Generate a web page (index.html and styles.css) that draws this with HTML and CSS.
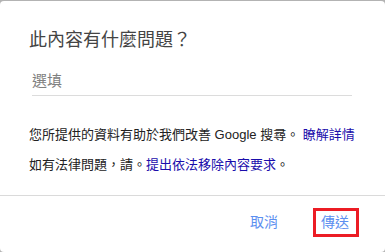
FILE: index.html
```html
<!DOCTYPE html>
<html lang="zh-Hant">
<head>
<meta charset="utf-8">
<title>此內容有什麼問題？</title>
<link rel="stylesheet" href="styles.css">
</head>
<body>
<div class="dialog">
  <div class="content">
    <h1 class="title">此內容有什麼問題？</h1>
    <div class="field"><span class="placeholder">選填</span></div>
    <p class="note">您所提供的資料有助於我們改善 Google 搜尋。 <a class="link" href="#">瞭解詳情</a></p>
    <p class="note">如有法律問題，請。<a class="link" href="#">提出依法移除內容要求</a>。</p>
  </div>
  <div class="footer">
    <span class="btn cancel">取消</span>
    <span class="btn send">傳送</span>
  </div>
</div>
</body>
</html>
```

FILE: styles.css
```css
html, body {
  margin: 0;
  padding: 0;
}
body {
  background: #b3b3b3;
  width: 385px;
  height: 252px;
  overflow: hidden;
  font-family: "Liberation Sans", "Noto Sans CJK TC", sans-serif;
}
.dialog {
  margin-top: 1px;
  height: 251px;
  background: #fff;
  border-radius: 4px;
  display: flex;
  flex-direction: column;
}
.content {
  padding: 0 20px 0 29px;
  border-bottom: 1px solid #dadada;
  height: 195px;
  box-sizing: border-box;
}
.title {
  margin: 27px 0 0 0;
  font-size: 18px;
  line-height: 24px;
  font-weight: normal;
  color: #444;
}
.field {
  margin: 19px 13px 0 3px;
  height: 25px;
  border-bottom: 1px solid #dcdcdc;
  box-sizing: border-box;
  font-size: 15px;
  line-height: 19px;
}
.placeholder {
  color: #808080;
}
.note {
  margin: 0;
  font-size: 13px;
  line-height: 29px;
  color: #222;
  white-space: nowrap;
}
.field + .note {
  margin-top: 24px;
}
.note + .note {
  margin-top: 1px;
}
.link {
  color: #1a0dab;
  text-decoration: none;
}
.footer {
  display: flex;
  justify-content: flex-end;
  align-items: center;
  padding: 12px 26px 0 0;
}
.btn {
  font-size: 14px;
  line-height: 17px;
  color: #5c8ff0;
}
.cancel {
  margin-right: 35px;
}
.send {
  border: 3px solid #ec1c24;
  padding: 3px 7px 3px 5px;
}
```
